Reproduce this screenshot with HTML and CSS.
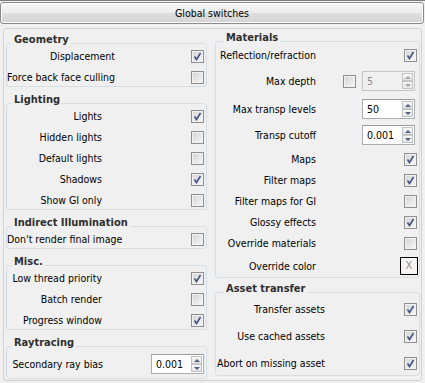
FILE: index.html
```html
<!DOCTYPE html>
<html lang="en">
<head>
    <meta charset="UTF-8">
    <meta name="viewport" content="width=device-width, initial-scale=1.0">
    <title>Global switches</title>
    <link rel="stylesheet" href="styles.css">
</head>
<body>

<div class="rollout-head">Global switches</div>

<div class="rollout">
    <!-- kolom kiri -->
    <div class="col col-left">
        <div class="grp grp-geom">
            <div class="grp-title">Geometry</div>
            <div class="row"><span class="lbl">Displacement</span><span class="chk on"><svg viewBox="0 0 11 11"><polyline points="2.5,5.5 4.5,8.5 8.5,2"/></svg></span></div>
            <div class="row"><span class="lbl">Force back face culling</span><span class="chk"></span></div>
        </div>

        <div class="grp grp-light">
            <div class="grp-title">Lighting</div>
            <div class="row"><span class="lbl">Lights</span><span class="chk on"><svg viewBox="0 0 11 11"><polyline points="2.5,5.5 4.5,8.5 8.5,2"/></svg></span></div>
            <div class="row"><span class="lbl">Hidden lights</span><span class="chk"></span></div>
            <div class="row"><span class="lbl">Default lights</span><span class="chk"></span></div>
            <div class="row"><span class="lbl">Shadows</span><span class="chk on"><svg viewBox="0 0 11 11"><polyline points="2.5,5.5 4.5,8.5 8.5,2"/></svg></span></div>
            <div class="row"><span class="lbl">Show GI only</span><span class="chk"></span></div>
        </div>

        <div class="grp grp-gi">
            <div class="grp-title">Indirect Illumination</div>
            <div class="row"><span class="lbl">Don't render final image</span><span class="chk"></span></div>
        </div>

        <div class="grp grp-misc">
            <div class="grp-title">Misc.</div>
            <div class="row"><span class="lbl">Low thread priority</span><span class="chk on"><svg viewBox="0 0 11 11"><polyline points="2.5,5.5 4.5,8.5 8.5,2"/></svg></span></div>
            <div class="row"><span class="lbl">Batch render</span><span class="chk"></span></div>
            <div class="row"><span class="lbl">Progress window</span><span class="chk on"><svg viewBox="0 0 11 11"><polyline points="2.5,5.5 4.5,8.5 8.5,2"/></svg></span></div>
        </div>

        <div class="grp grp-ray">
            <div class="grp-title">Raytracing</div>
            <div class="row row-spin mt7">
                <span class="lbl">Secondary ray bias</span>
                <span class="spin spin-left"><span class="val">0.001</span><span class="arrows"><span class="arr"><i class="up"></i></span><span class="arr"><i class="down"></i></span></span></span>
            </div>
        </div>
    </div>

    <!-- kolom kanan -->
    <div class="col col-right">
        <div class="grp grp-mat">
            <div class="grp-title">Materials</div>
            <div class="row mt4"><span class="lbl">Reflection/refraction</span><span class="chk on"><svg viewBox="0 0 11 11"><polyline points="2.5,5.5 4.5,8.5 8.5,2"/></svg></span></div>
            <div class="row row-spin mt7">
                <span class="lbl">Max depth</span>
                <span class="chk chk-inline"></span>
                <span class="spin off"><span class="val">5</span><span class="arrows"><span class="arr"><i class="up"></i></span><span class="arr"><i class="down"></i></span></span></span>
            </div>
            <div class="row row-spin mt8">
                <span class="lbl">Max transp levels</span>
                <span class="spin"><span class="val">50</span><span class="arrows"><span class="arr"><i class="up"></i></span><span class="arr"><i class="down"></i></span></span></span>
            </div>
            <div class="row row-spin mt6">
                <span class="lbl">Transp cutoff</span>
                <span class="spin"><span class="val">0.001</span><span class="arrows"><span class="arr"><i class="up"></i></span><span class="arr"><i class="down"></i></span></span></span>
            </div>
            <div class="row mt5"><span class="lbl">Maps</span><span class="chk on"><svg viewBox="0 0 11 11"><polyline points="2.5,5.5 4.5,8.5 8.5,2"/></svg></span></div>
            <div class="row"><span class="lbl">Filter maps</span><span class="chk on"><svg viewBox="0 0 11 11"><polyline points="2.5,5.5 4.5,8.5 8.5,2"/></svg></span></div>
            <div class="row"><span class="lbl">Filter maps for GI</span><span class="chk"></span></div>
            <div class="row"><span class="lbl">Glossy effects</span><span class="chk on"><svg viewBox="0 0 11 11"><polyline points="2.5,5.5 4.5,8.5 8.5,2"/></svg></span></div>
            <div class="row"><span class="lbl">Override materials</span><span class="chk"></span></div>
            <div class="row mt5"><span class="lbl">Override color</span><span class="swatch">X</span></div>
        </div>

        <div class="grp grp-asset">
            <div class="grp-title">Asset transfer</div>
            <div class="row mt7"><span class="lbl">Transfer assets</span><span class="chk on"><svg viewBox="0 0 11 11"><polyline points="2.5,5.5 4.5,8.5 8.5,2"/></svg></span></div>
            <div class="row mt9"><span class="lbl">Use cached assets</span><span class="chk on"><svg viewBox="0 0 11 11"><polyline points="2.5,5.5 4.5,8.5 8.5,2"/></svg></span></div>
            <div class="row mt9"><span class="lbl">Abort on missing asset</span><span class="chk on"><svg viewBox="0 0 11 11"><polyline points="2.5,5.5 4.5,8.5 8.5,2"/></svg></span></div>
        </div>
    </div>
</div>

</body>
</html>
```

FILE: styles.css
```css
body {
    margin: 0;
    background-color: #f0f0f0;
    font-family: "DejaVu Sans Condensed", "Liberation Sans", sans-serif;
    font-size: 10.5px;
    color: #000;
    border-top: 1px solid #7c7c7c;
}
.rollout-head {
    width: 422px;
    height: 20px;
    margin-top: 1px;
    border: 1px solid #8b8b8b;
    border-radius: 3px;
    background: linear-gradient(#f5f5f5, #ededed 50%, #dedede 50%, #d4d4d4);
    box-shadow: inset 0 0 0 1px #fbfbfb;
    text-align: center;
    line-height: 20px;
}
.rollout {
    display: flex;
    align-items: flex-start;
    gap: 8px;
    width: 414px;
    margin: 4px 0 0 3px;
    padding: 0 1px 1px 2px;
    border: 1px solid #d2d2d2;
    border-radius: 3px;
}
.col-left {
    width: 201px;
    padding-top: 14px;
}
.col-right {
    width: 205px;
    padding-top: 12px;
}
.grp {
    border: 1px solid #d5dfe5;
    border-radius: 3px;
    margin-top: 16px;
}
.grp:first-child {
    margin-top: 0;
}
.grp-title {
    width: fit-content;
    margin: -10px 0 -2px 5px;
    padding: 0 2px;
    background-color: #f0f0f0;
    font-weight: bold;
    font-size: 11px;
    color: #2e2e2e;
    line-height: 12px;
}
.col-right .grp-title {
    margin-left: 8px;
}
.grp-mat {
    padding-bottom: 2px;
}
.grp-asset {
    margin-top: 14px;
    padding-bottom: 3px;
}
.grp-ray {
    padding-bottom: 4px;
}
.row {
    display: flex;
    align-items: center;
    height: 18px;
    margin-top: 3px;
    white-space: nowrap;
}
.row-spin {
    height: 20px;
}
.mt4 { margin-top: 4px; }
.mt5 { margin-top: 5px; }
.mt6 { margin-top: 6px; }
.mt7 { margin-top: 7px; }
.mt8 { margin-top: 8px; }
.mt9 { margin-top: 9px; }
.lbl {
    flex-shrink: 0;
    text-align: right;
}
.grp-geom .lbl { width: 108px; }
.grp-light .lbl, .grp-misc .lbl { width: 95px; }
.grp-ray .lbl { width: 96px; }
.grp-gi .lbl { text-align: left; }
.grp-mat .lbl { width: 100px; }
.grp-asset .lbl { width: 109px; }

.chk {
    display: flex;
    width: 11px;
    height: 11px;
    margin-left: auto;
    margin-right: 2px;
    border: 1px solid #8f8f8f;
    background: linear-gradient(135deg, #d3d3d3, #f8f8f8);
    box-shadow: inset 0 0 0 1px #f2f2f2;
}
.chk svg {
    width: 11px;
    height: 11px;
}
.chk polyline {
    fill: none;
    stroke: #3f5386;
    stroke-width: 1.6;
}
.chk-inline {
    margin-left: 27px;
}
.spin {
    display: flex;
    width: 51px;
    height: 18px;
    margin-left: auto;
    margin-right: 4px;
    border: 1px solid #abadb3;
    border-top-color: #9a9ca3;
    background-color: #fff;
}
.spin-left {
    margin-right: 2px;
}
.spin .val {
    flex: 1;
    padding-left: 4px;
    line-height: 18px;
}
.arrows {
    display: flex;
    flex-direction: column;
    width: 11px;
    margin: 1px;
}
.arr {
    flex: 1;
    display: flex;
    align-items: center;
    justify-content: center;
    border: 1px solid #c3c3c3;
    background: linear-gradient(#f7f7f7, #e5e5e5);
}
.arr i {
    width: 0;
    height: 0;
    border-left: 3px solid transparent;
    border-right: 3px solid transparent;
}
.arr .up {
    border-bottom: 3px solid #4d6185;
}
.arr .down {
    border-top: 3px solid #4d6185;
}
.spin.off {
    background-color: #f0f0f0;
    border-color: #c4c4c4;
    color: #8a8a8a;
}
.spin.off .arr .up {
    border-bottom-color: #a7a7a7;
}
.spin.off .arr .down {
    border-top-color: #a7a7a7;
}
.swatch {
    width: 16px;
    height: 16px;
    margin-left: auto;
    margin-right: 1px;
    border: 1px solid #000;
    background-color: #f4f4f4;
    color: #a08e7e;
    text-align: center;
    line-height: 16px;
    font-size: 11px;
}
```
